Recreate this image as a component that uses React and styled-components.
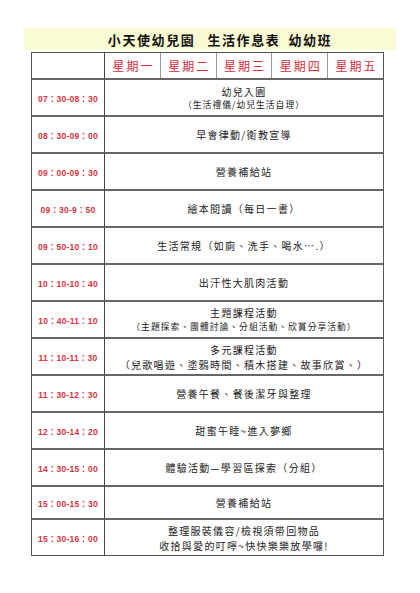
import React from "react";
import styled, { createGlobalStyle } from "styled-components";

const Global = createGlobalStyle`
  html, body { margin: 0; padding: 0; background: #fff; }
  body { font-family: "Noto Sans CJK TC", "Noto Sans CJK SC", sans-serif; }
`;

const Page = styled.div`
  width: 420px;
  height: 593px;
  padding-top: 28px;
  box-sizing: border-box;
  display: flex;
  flex-direction: column;
  align-items: center;
`;

const TitleBand = styled.div`
  width: 372px;
  height: 22px;
  background: #fafbd2;
  display: flex;
  align-items: center;
  justify-content: center;
  gap: 14px;
  font-size: 13px;
  font-weight: 700;
  color: #111;
  margin-bottom: 2px;
  padding-left: 20px;
  box-sizing: border-box;
`;

const TitlePart = styled.span`
  letter-spacing: 1.6px;
  margin-right: ${(p) => p.$mr || 0}px;
`;

const Table = styled.div`
  width: 353px;
  display: grid;
  grid-template-columns: 72px repeat(5, 1fr);
  border: 1px solid #555;
  box-sizing: border-box;
  margin-left: -5px;
`;

const HeadCell = styled.div`
  height: 25px;
  display: flex;
  align-items: center;
  justify-content: center;
  border-left: ${(p) => (p.$first ? "none" : p.$dark ? "1px solid #444" : "1px solid #999")};
  color: #d42d3a;
  font-size: 12px;
  letter-spacing: 2px;
  padding-left: 2px;
`;

const TimeCell = styled.div`
  height: ${(p) => p.$h}px;
  border-top: 2px solid #666;
  box-sizing: border-box;
  display: flex;
  align-items: center;
  justify-content: center;
  font-family: "Liberation Sans", "Noto Sans CJK TC", sans-serif;
  font-weight: 700;
  font-size: 8.5px;
  color: #d6343f;
  letter-spacing: 0.2px;
`;

const ContentCell = styled.div`
  grid-column: 2 / span 5;
  height: ${(p) => p.$h}px;
  border-top: 2px solid #666;
  border-left: 1px solid #444;
  box-sizing: border-box;
  display: flex;
  flex-direction: column;
  align-items: center;
  justify-content: center;
  color: #222;
`;

const Line = styled.div`
  font-size: ${(p) => (p.$small ? "8.8px" : "10px")};
  letter-spacing: ${(p) => (p.$small ? "1px" : "1.3px")};
  line-height: ${(p) => p.$lh}px;
  white-space: nowrap;
`;

const days = ["星期一", "星期二", "星期三", "星期四", "星期五"];

const rows = [
  { t: "07：30-08：30", lines: [["幼兒入園"], ["（生活禮儀/幼兒生活自理）", true]], lh: 13 },
  { t: "08：30-09：00", lines: [["早會律動/衛教宣導"]] },
  { t: "09：00-09：30", lines: [["營養補給站"]] },
  { t: "09：30-9：50", lines: [["繪本閱讀（每日一書）"]] },
  { t: "09：50-10：10", lines: [["生活常規（如廁、洗手、喝水….）"]] },
  { t: "10：10-10：40", lines: [["出汗性大肌肉活動"]] },
  { t: "10：40-11：10", lines: [["主題課程活動"], ["（主題探索、團體討論、分組活動、欣賞分享活動）", true]], lh: 14 },
  { t: "11：10-11：30", lines: [["多元課程活動"], ["（兒歌唱遊、塗鴉時間、積木搭建、故事欣賞、）"]], lh: 15 },
  { t: "11：30-12：30", lines: [["營養午餐、餐後潔牙與整理"]] },
  { t: "12：30-14：20", lines: [["甜蜜午睡~進入夢鄉"]] },
  { t: "14：30-15：00", lines: [["體驗活動—學習區探索（分組）"]] },
  { t: "15：00-15：30", lines: [["營養補給站"]], h: 33 },
  { t: "15：30-16：00", lines: [["整理服裝儀容/檢視須帶回物品"], ["收拾與愛的叮嚀~快快樂樂放學囉!"]], lh: 15 },
];

export default function App() {
  return (
    <>
      <Global />
      <Page>
        <TitleBand>
          <TitlePart $mr={-2}>小天使幼兒園</TitlePart>
          <TitlePart $mr={-6}>生活作息表</TitlePart>
          <TitlePart>幼幼班</TitlePart>
        </TitleBand>
        <Table>
          <HeadCell $first />
          {days.map((d, i) => (
            <HeadCell key={d} $dark={i === 0}>
              {d}
            </HeadCell>
          ))}
          {rows.map((r) => (
            <React.Fragment key={r.t}>
              <TimeCell $h={r.h || 37}>{r.t}</TimeCell>
              <ContentCell $h={r.h || 37}>
                {r.lines.map(([txt, small], j) => (
                  <Line key={j} $small={small} $lh={r.lh || 16}>
                    {txt}
                  </Line>
                ))}
              </ContentCell>
            </React.Fragment>
          ))}
        </Table>
      </Page>
    </>
  );
}
